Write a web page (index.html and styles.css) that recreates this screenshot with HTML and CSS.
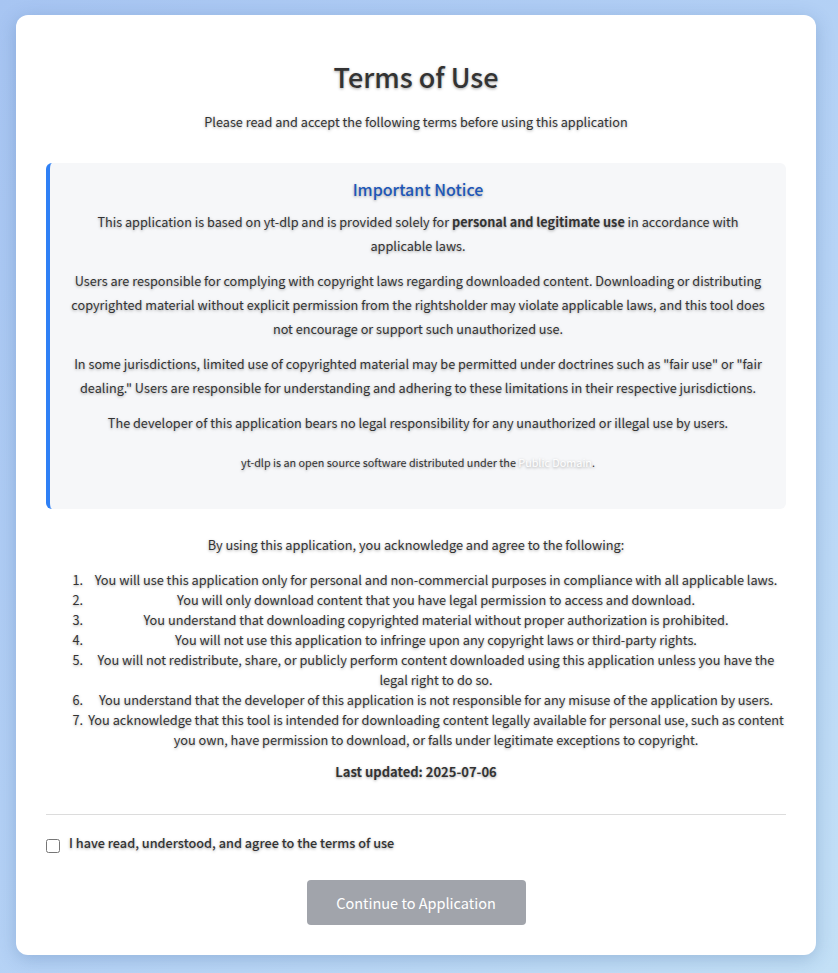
FILE: index.html
```html
<!DOCTYPE html>
<html lang="en">
<head>
<meta charset="utf-8">
<title>Terms of Use</title>
<link rel="stylesheet" href="styles.css">
</head>
<body>
<div class="card">
  <h1 class="title">Terms of Use</h1>
  <p class="subtitle">Please read and accept the following terms before using this application</p>

  <div class="notice">
    <h2 class="notice-title">Important Notice</h2>
    <p>This application is based on yt-dlp and is provided solely for <strong>personal and legitimate use</strong> in accordance with applicable laws.</p>
    <p>Users are responsible for complying with copyright laws regarding downloaded content. Downloading or distributing copyrighted material without explicit permission from the rightsholder may violate applicable laws, and this tool does not encourage or support such unauthorized use.</p>
    <p>In some jurisdictions, limited use of copyrighted material may be permitted under doctrines such as "fair use" or "fair dealing." Users are responsible for understanding and adhering to these limitations in their respective jurisdictions.</p>
    <p>The developer of this application bears no legal responsibility for any unauthorized or illegal use by users.</p>
    <p class="small">yt-dlp is an open source software distributed under the <a class="link" href="#">Public Domain</a>.</p>
  </div>

  <p class="intro">By using this application, you acknowledge and agree to the following:</p>
  <ol class="terms">
    <li>You will use this application only for personal and non-commercial purposes in compliance with all applicable laws.</li>
    <li>You will only download content that you have legal permission to access and download.</li>
    <li>You understand that downloading copyrighted material without proper authorization is prohibited.</li>
    <li>You will not use this application to infringe upon any copyright laws or third-party rights.</li>
    <li>You will not redistribute, share, or publicly perform content downloaded using this application unless you have the legal right to do so.</li>
    <li>You understand that the developer of this application is not responsible for any misuse of the application by users.</li>
    <li>You acknowledge that this tool is intended for downloading content legally available for personal use, such as content you own, have permission to download, or falls under legitimate exceptions to copyright.</li>
  </ol>
  <p class="updated">Last updated: 2025-07-06</p>

  <div class="divider"></div>

  <label class="agree">
    <input type="checkbox" class="agree-box">
    <span>I have read, understood, and agree to the terms of use</span>
  </label>

  <div class="actions">
    <button class="continue" disabled>Continue to Application</button>
  </div>
</div>
</body>
</html>
```

FILE: styles.css
```css
html, body {
  margin: 0;
  padding: 0;
}
body {
  min-height: 973px;
  background: linear-gradient(135deg, #a7c5f2 0%, #b7d4f6 60%, #c3e0f6 100%);
  font-family: "Noto Sans CJK KR", "Noto Sans", sans-serif;
  color: #333;
  padding: 15px 22px 19px 16px;
  box-sizing: border-box;
}
.card {
  background: #fff;
  border-radius: 12px;
  box-shadow: 0 4px 18px rgba(40, 80, 140, 0.25);
  padding: 30px 30px 30px;
  width: 800px;
  box-sizing: border-box;
  text-shadow: 0 1px 3px rgba(0, 0, 0, 0.35);
  text-align: center;
}
.title {
  font-size: 27px;
  font-weight: 500;
  margin: 12px 0 15px;
  line-height: 40px;
}
.subtitle {
  font-size: 12.7px;
  margin: 0 0 31px;
  line-height: 20px;
}
.notice {
  background: #f6f7f9;
  border-left: 4px solid #2f80f5;
  border-radius: 6px;
  padding: 13px 18px 35px;
}
.notice-title {
  color: #1d57b8;
  font-size: 16px;
  font-weight: 500;
  margin: 0 0 8px;
  line-height: 26px;
}
.notice p {
  font-size: 12.7px;
  line-height: 24px;
  margin: 0 0 11px;
}
.notice strong {
  font-weight: 700;
}
.notice p.small {
  font-size: 10.8px;
  margin: 15px 0 0;
}
.link {
  color: #fff;
  text-decoration: none;
}
.intro {
  font-size: 12.75px;
  line-height: 20px;
  margin: 26px 0 15px;
}
.terms {
  font-size: 12.75px;
  line-height: 20px;
  margin: 0;
  padding-left: 40px;
}
.updated {
  font-size: 13px;
  font-weight: 700;
  margin: 12px 0 0;
  line-height: 20px;
}
.divider {
  height: 1px;
  background: #dcdcdc;
  margin: 32px 0 18px;
}
.agree {
  display: flex;
  align-items: flex-start;
  gap: 9px;
  text-align: left;
  font-size: 12.7px;
  font-weight: 500;
  line-height: 20px;
}
.agree-box {
  margin: 6px 0 0;
  width: 14px;
  height: 14px;
}
.actions {
  display: flex;
  justify-content: center;
  margin-top: 27px;
}
.continue {
  font-family: inherit;
  font-size: 14.5px;
  color: #fff;
  background: #a1a4ab;
  border: none;
  border-radius: 4px;
  width: 219px;
  height: 45px;
}
```
